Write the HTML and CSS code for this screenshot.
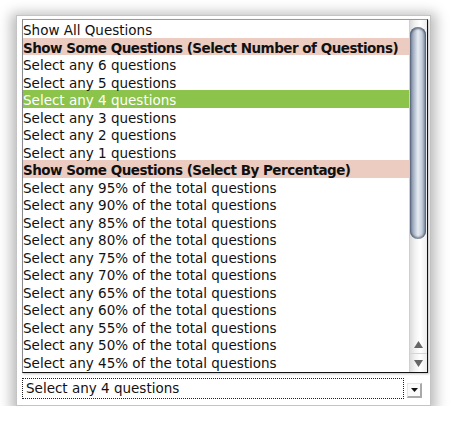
FILE: index.html
```html
<!DOCTYPE html>
<html>
<head>
<meta charset="utf-8">
<link rel="stylesheet" href="styles.css">
</head>
<body>
<div class="panel">
  <div class="select">
    <div class="select-text">Select any 4 questions</div>
    <div class="select-btn"><svg width="7" height="4" viewBox="0 0 7 4"><path d="M0 0H7L3.5 4Z" fill="#111"/></svg></div>
  </div>
  <div class="popup">
    <ul class="options">
      <li>Show All Questions</li>
      <li class="group">Show Some Questions (Select Number of Questions)</li>
      <li>Select any 6 questions</li>
      <li>Select any 5 questions</li>
      <li class="selected">Select any 4 questions</li>
      <li>Select any 3 questions</li>
      <li>Select any 2 questions</li>
      <li>Select any 1 questions</li>
      <li class="group">Show Some Questions (Select By Percentage)</li>
      <li>Select any 95% of the total questions</li>
      <li>Select any 90% of the total questions</li>
      <li>Select any 85% of the total questions</li>
      <li>Select any 80% of the total questions</li>
      <li>Select any 75% of the total questions</li>
      <li>Select any 70% of the total questions</li>
      <li>Select any 65% of the total questions</li>
      <li>Select any 60% of the total questions</li>
      <li>Select any 55% of the total questions</li>
      <li>Select any 50% of the total questions</li>
      <li>Select any 45% of the total questions</li>
    </ul>
    <div class="scrollbar">
      <div class="thumb"></div>
      <div class="spacer"></div>
      <div class="arrow up"><svg width="9" height="7" viewBox="0 0 9 7"><path d="M4.5 0L9 7H0Z" fill="#666"/></svg></div>
      <div class="arrow down"><svg width="9" height="7" viewBox="0 0 9 7"><path d="M0 0H9L4.5 7Z" fill="#666"/></svg></div>
    </div>
  </div>
</div>
</body>
</html>
```
FILE: styles.css
```css
html, body {
  margin: 0;
  padding: 0;
  background: #ffffff;
}
body {
  padding: 15px 0 0 16px;
  font-family: "DejaVu Sans", "Liberation Sans", sans-serif;
}
.panel {
  position: relative;
  box-sizing: border-box;
  width: 415px;
  height: 391px;
  background: #ffffff;
  border: 1px solid #c4c4c4;
  box-shadow: 0 3px 12px 5px rgba(0, 0, 0, 0.27);
  display: flex;
  flex-direction: column;
  justify-content: flex-end;
  padding: 0 0 6px 5px;
}
.select {
  display: flex;
  align-items: flex-end;
  gap: 3px;
  height: 21px;
}
.select-text {
  box-sizing: border-box;
  width: 382px;
  height: 21px;
  border: 1px dotted #222;
  font-size: 13.5px;
  line-height: 19px;
  padding-left: 3px;
  color: #111;
  white-space: nowrap;
}
.select-btn {
  box-sizing: border-box;
  width: 15px;
  height: 15px;
  margin-bottom: 1px;
  border-right: 2px solid #a9a9a9;
  border-bottom: 2px solid #a9a9a9;
  border-left: 1px solid #e6e6e6;
  border-top: 1px solid #e6e6e6;
  background: #fafafa;
  display: flex;
  align-items: center;
  justify-content: center;
}
.popup {
  position: absolute;
  left: 5px;
  top: 3px;
  box-sizing: border-box;
  width: 406px;
  height: 354px;
  border: 1px solid;
  border-color: #9a9a9a #111 #111 #8a8a8a;
  background: #fff;
  display: flex;
  box-shadow: 1px 1px 2px rgba(0, 0, 0, 0.25);
}
.options {
  list-style: none;
  margin: 0;
  padding: 0;
  width: 386px;
  overflow: hidden;
  font-size: 13.5px;
  color: #111;
}
.options li {
  box-sizing: border-box;
  height: 17.5px;
  padding: 3px 0 0 0;
  line-height: 14.5px;
  white-space: nowrap;
}
.options li.group {
  font-weight: bold;
  letter-spacing: -0.5px;
  background: #eccbc0;
}
.options li.selected {
  background: #8bc34b;
  color: #fff;
}
.scrollbar {
  box-sizing: border-box;
  width: 18px;
  border-left: 1px solid #d0d0d0;
  display: flex;
  flex-direction: column;
  background: linear-gradient(to right, #dcdcdc, #f2f2f2 30%, #ffffff 60%, #ececec);
}
.thumb {
  margin: 7px 1px 0 0;
  height: 212px;
  border-radius: 8px;
  background: linear-gradient(to right, #6f7e95, #aeb9ca 25%, #e6ecf4 50%, #c2ccda 75%, #6a7990);
  box-shadow: inset 0 2px 2px rgba(40, 50, 70, 0.6), inset 0 -2px 2px rgba(40, 50, 70, 0.5);
}
.spacer {
  flex: 1;
}
.arrow {
  height: 18px;
  display: flex;
  align-items: center;
  justify-content: center;
}
.arrow.down {
  border-top: 1px solid #d6d6d6;
}
```
